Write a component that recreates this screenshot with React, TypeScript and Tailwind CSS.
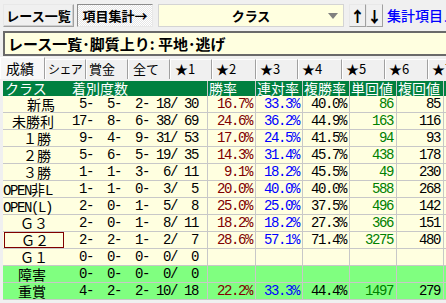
import React from 'react';

type Row = {
  name: string;
  pad: string;
  counts: number[];
  win?: string;
  ren?: string;
  fuku?: string;
  tan?: string;
  fv?: string;
  green?: boolean;
  boxed?: boolean;
};

const rows: Row[] = [
  { name: '新馬', pad: 'pl-[24px]', counts: [5, 5, 2, 18, 30], win: '16.7%', ren: '33.3%', fuku: '40.0%', tan: '86', fv: '85' },
  { name: '未勝利', pad: 'pl-[9px]', counts: [17, 8, 6, 38, 69], win: '24.6%', ren: '36.2%', fuku: '44.9%', tan: '163', fv: '116' },
  { name: '１勝', pad: 'pl-[20px]', counts: [9, 4, 9, 31, 53], win: '17.0%', ren: '24.5%', fuku: '41.5%', tan: '94', fv: '93' },
  { name: '２勝', pad: 'pl-[20px]', counts: [5, 6, 5, 19, 35], win: '14.3%', ren: '31.4%', fuku: '45.7%', tan: '438', fv: '178' },
  { name: '３勝', pad: 'pl-[20px]', counts: [1, 1, 3, 6, 11], win: '9.1%', ren: '18.2%', fuku: '45.5%', tan: '49', fv: '230' },
  { name: 'OPEN非L', pad: 'pl-[0px]', counts: [1, 1, 0, 3, 5], win: '20.0%', ren: '40.0%', fuku: '40.0%', tan: '588', fv: '268' },
  { name: 'OPEN(L)', pad: 'pl-[0px]', counts: [2, 0, 1, 5, 8], win: '25.0%', ren: '25.0%', fuku: '37.5%', tan: '496', fv: '142' },
  { name: 'Ｇ３', pad: 'pl-[17px]', counts: [2, 0, 1, 8, 11], win: '18.2%', ren: '18.2%', fuku: '27.3%', tan: '366', fv: '151' },
  { name: 'Ｇ２', pad: 'pl-[17px]', counts: [2, 2, 1, 2, 7], win: '28.6%', ren: '57.1%', fuku: '71.4%', tan: '3275', fv: '480', boxed: true },
  { name: 'Ｇ１', pad: 'pl-[17px]', counts: [0, 0, 0, 0, 0] },
  { name: '障害', pad: 'pl-[15px]', counts: [0, 0, 0, 0, 0], green: true },
  { name: '重賞', pad: 'pl-[15px]', counts: [4, 2, 2, 10, 18], win: '22.2%', ren: '33.3%', fuku: '44.4%', tan: '1497', fv: '279', green: true },
];

const tabs = [
  { label: '成績', w: 'w-[45px]', t: 'text-[14px] pl-[5px]' },
  { label: 'シェア', w: 'w-[41px]', t: 'text-[12px] tracking-[-0.6px] pl-[2px]' },
  { label: '賞金', w: 'w-[42px]', t: 'text-[13px] pl-[2px]' },
  { label: '全て', w: 'w-[42px]', t: 'text-[13px] pl-[4px]' },
  { label: '★1', w: 'w-[42px]', t: 'text-[13px] pl-[4px]' },
  { label: '★2', w: 'w-[44px]', t: 'text-[13px] pl-[3px]' },
  { label: '★3', w: 'w-[42px]', t: 'text-[13px] pl-[3px]' },
  { label: '★4', w: 'w-[44px]', t: 'text-[13px] pl-[3px]' },
  { label: '★5', w: 'w-[43px]', t: 'text-[13px] pl-[3px]' },
  { label: '★6', w: 'w-[43px]', t: 'text-[13px] pl-[3px]' },
  { label: '★7', w: 'w-[30px]', t: 'text-[13px] pl-[3px]' },
];

const mono = "font-['Liberation_Mono',monospace] tracking-[-1.4px]";

const p3 = (n: number) => String(n).padStart(3, ' ');
const countText = (c: number[]) => `${p3(c[0])}-${p3(c[1])}-${p3(c[2])}-${p3(c[3])}/${p3(c[4])}`;

// 半角部分だけ等幅フォントにする
const Label = ({ text }: { text: string }) => {
  const parts = text.match(/[\x20-\x7e]+|[^\x20-\x7e]+/g) ?? [];
  return (
    <>
      {parts.map((s, i) =>
        /^[\x20-\x7e]+$/.test(s) ? (
          <span key={i} className={`inline-block h-[16px] leading-[16px] ${mono}`}>{s}</span>
        ) : (
          <span key={i} className="inline-block h-[16px] leading-[16px]">{s}</span>
        )
      )}
    </>
  );
};

const numCell = 'h-full shrink-0 border-r border-[#c8c8c8] text-right pr-[3px] whitespace-pre';

export default function App() {
  return (
    <div className="w-[446px] h-[303px] overflow-hidden bg-[#f0f0f0] font-['Noto_Sans_CJK_JP',sans-serif] text-black">
      {/* 上部ツールバー */}
      <div className="flex items-start h-[31px] pt-[4px] pl-[3px] whitespace-nowrap">
        <button className="w-[71px] h-[23px] shrink-0 border border-[#a0a0a0] border-t-[#e8e8e8] border-l-[#e8e8e8] bg-[#f0f0f0] shadow-[inset_-1px_-1px_0_#d0d0d0] text-[13px] font-bold leading-[21px]">
          レース一覧
        </button>
        <button className="ml-[3px] w-[76px] h-[23px] shrink-0 border border-[#e8e8e8] border-t-[#8c8c8c] border-l-[#8c8c8c] bg-[repeating-conic-gradient(#ffffff_0_25%,#e6e6e6_0_50%)] bg-[length:2px_2px] text-[13px] font-bold leading-[21px]">
          項目集計→
        </button>
        <div className="ml-[5px] w-[186px] h-[23px] shrink-0 border border-[#d4d4d4] bg-[#ffffe0] flex items-center relative">
          <span className="w-full text-center text-[13px] font-bold leading-[21px]">クラス</span>
          <svg className="absolute right-[5px] top-[8px]" width="10" height="6" viewBox="0 0 10 6">
            <path d="M0 0 H10 L5 6 Z" fill="#808080" />
          </svg>
        </div>
        <button className="ml-[5px] w-[17px] h-[23px] shrink-0 border border-[#a0a0a0] border-t-[#e8e8e8] border-l-[#e8e8e8] bg-[#f0f0f0] text-[15px] font-black leading-[21px]">
          ↑
        </button>
        <button className="w-[17px] h-[23px] shrink-0 border border-[#a0a0a0] border-t-[#e8e8e8] border-l-[#e8e8e8] bg-[#f0f0f0] text-[15px] font-black leading-[21px]">
          ↓
        </button>
        <span className="ml-[4px] text-[14px] font-medium leading-[23px] text-[#0000ff]">集計項目メニュー</span>
      </div>

      {/* タイトル */}
      <div className="ml-[3px] h-[25px] border-t-2 border-b-2 border-l-2 border-[#6a6a6a] bg-[#ffffe0] flex items-center pl-[3px] whitespace-nowrap">
        <span className="text-[15px] font-bold leading-[21px]">レース一覧･脚質上り: 平地･逃げ</span>
      </div>

      {/* タブ */}
      <div className="mt-[1px] flex items-end h-[22px] whitespace-nowrap">
        {tabs.map((t, i) => (
          <div
            key={t.label}
            className={`${t.w} ${t.t} shrink-0 overflow-hidden border border-b-0 border-t-white border-l-white border-r-[#a0a0a0] ${
              i === 0 ? 'h-[22px] leading-[20px] bg-[#f7f7f7]' : 'h-[20px] leading-[18px] border-b border-b-white'
            }`}
          >
            {t.label}
          </div>
        ))}
      </div>

      {/* 集計テーブル */}
      <div className="mt-[2px] ml-[3px]">
        <div className="flex h-[15px] bg-[#008040] text-white text-[14px] leading-[15px] whitespace-nowrap">
          <div className="w-[61px] shrink-0 pl-[2px]">クラス</div>
          <div className="w-[144px] shrink-0 pl-[8px] border-r border-[#c8c8c8]">着別度数</div>
          <div className="w-[48px] shrink-0 pl-[1px] border-r border-[#c8c8c8]">勝率</div>
          <div className="w-[47px] shrink-0 pl-[1px] border-r border-[#c8c8c8]">連対率</div>
          <div className="w-[47px] shrink-0 pl-[1px] border-r border-[#c8c8c8]">複勝率</div>
          <div className="w-[47px] shrink-0 pl-[1px] border-r border-[#c8c8c8]">単回値</div>
          <div className="w-[47px] shrink-0 pl-[1px] border-r border-[#c8c8c8]">複回値</div>
          <div className="flex-1" />
        </div>
        {rows.map((r) => (
          <div
            key={r.name}
            className={`flex h-[17px] border-b border-[#c8c8c8] text-[14px] leading-[16px] whitespace-nowrap ${
              r.green ? 'bg-[#80ff80]' : 'bg-[#ffffe0]'
            }`}
          >
            <div className="w-[61px] shrink-0 h-full flex">
              <div className={`w-[60px] ${r.pad} ${r.boxed ? 'ml-[1px] shadow-[inset_0_0_0_1px_#800000]' : ''}`}>
                <Label text={r.name} />
              </div>
            </div>
            <div className={`w-[144px] ${numCell} pr-[9px] ${mono}`}>{countText(r.counts)}</div>
            <div className={`w-[48px] ${numCell} ${mono} text-[#800000]`}>{r.win ?? ''}</div>
            <div className={`w-[47px] ${numCell} ${mono} text-[#0000ff]`}>{r.ren ?? ''}</div>
            <div className={`w-[47px] ${numCell} ${mono}`}>{r.fuku ?? ''}</div>
            <div className={`w-[47px] ${numCell} ${mono} text-[#008000]`}>{r.tan ?? ''}</div>
            <div className={`w-[47px] ${numCell} ${mono}`}>{r.fv ?? ''}</div>
            <div className="flex-1" />
          </div>
        ))}
      </div>
    </div>
  );
}
